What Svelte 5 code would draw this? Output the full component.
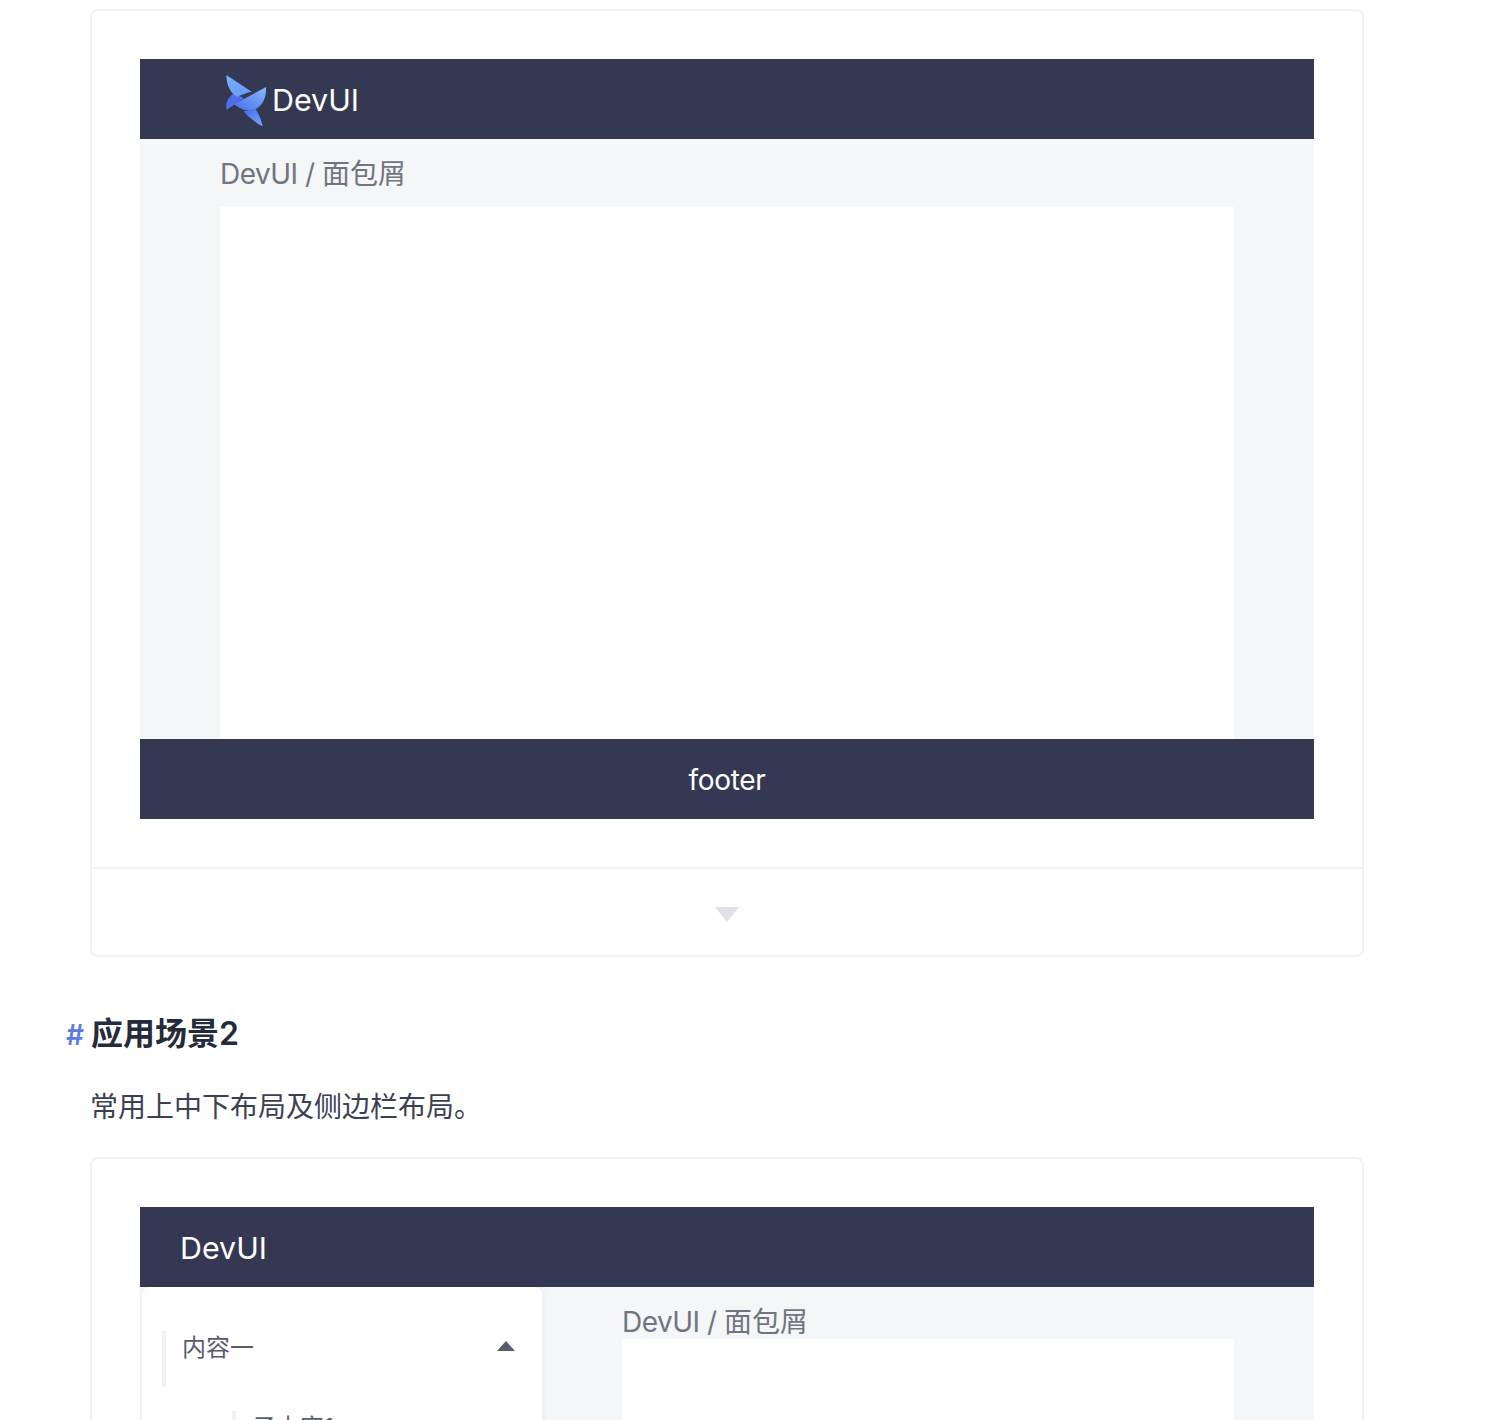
<script>
  const subItems = ['子内容1', '子内容2', '子内容3'];
</script>

<div class="page">
  <section class="card first">
    <div class="demo">
      <div class="layout">
        <header class="bar top logo-bar">
          <svg class="logo" viewBox="0 0 150 180" aria-hidden="true">
            <defs>
              <linearGradient id="w1" x1="0" y1="0" x2="1" y2="1">
                <stop offset="0" stop-color="#72b4fc" />
                <stop offset="1" stop-color="#6a94f6" />
              </linearGradient>
              <linearGradient id="w3" x1="1" y1="0" x2="0" y2="1">
                <stop offset="0" stop-color="#84b8fc" />
                <stop offset="1" stop-color="#4a6cea" />
              </linearGradient>
              <linearGradient id="w4" x1="0" y1="0" x2="1" y2="1">
                <stop offset="0" stop-color="#4468e6" />
                <stop offset="1" stop-color="#73a8fa" />
              </linearGradient>
            </defs>
            <path d="M14 122 C8 102 20 84 36 72 L66 88 Z" fill="#4a6fe8" />
            <path d="M13 18 L89 68 C72 72 56 78 46 84 C26 72 14 52 13 18Z" fill="url(#w1)" />
            <path d="M132 54 L36 106 C50 116 68 127 84 125 C116 120 134 92 132 54Z" fill="url(#w3)" />
            <path d="M64 125 C78 127 92 125 101 120 C110 135 118 152 122 172 C100 160 78 144 64 125Z" fill="url(#w4)" />
          </svg>
          <span class="brand">DevUI</span>
        </header>
        <div class="crumb-area">
          <div class="crumb"><span class="latin">DevUI /{' '}</span>面包屑</div>
          <div class="content"></div>
        </div>
        <footer class="bar foot">footer</footer>
      </div>
    </div>
    <div class="toggle">
      <span class="tri"></span>
    </div>
  </section>

  <h2 class="title"><span class="hash">#</span>应用场景2</h2>
  <p class="desc">常用上中下布局及侧边栏布局。</p>

  <section class="card">
    <div class="demo">
      <div class="layout">
        <header class="bar top plain">
          <span class="brand">DevUI</span>
        </header>
        <div class="split">
          <aside class="side">
            <div class="menu-item">
              <span>内容一</span>
              <span class="up"></span>
            </div>
            {#each subItems as item}
              <div class="sub-item">{item}</div>
            {/each}
          </aside>
          <div class="main">
            <div class="crumb small"><span class="latin">DevUI /{' '}</span>面包屑</div>
            <div class="content tall"></div>
          </div>
        </div>
      </div>
    </div>
  </section>
</div>

<style>
  :global(body) {
    margin: 0;
    background: #fff;
  }
  .page {
    height: 1420px;
    overflow: hidden;
    box-sizing: border-box;
    padding: 9px 0 0 90px;
    font-family: Inter, "Noto Sans CJK SC", sans-serif;
    color: #252b3a;
  }
  .card {
    box-sizing: border-box;
    width: 1274px;
    border: 2px solid #f2f2f3;
    border-radius: 8px;
    background: #fff;
  }
  .demo {
    padding: 48px;
  }
  .first .demo {
    border-bottom: 2px solid #f2f2f3;
  }
  .bar {
    height: 80px;
    display: flex;
    align-items: center;
    background: #353853;
    color: #fff;
  }
  .logo-bar {
    padding-left: 82px;
  }
  .plain {
    padding-left: 40px;
  }
  .logo {
    width: 50px;
    height: 60px;
    flex: none;
  }
  .brand {
    font-size: 30.4px;
    line-height: 40px;
    padding-top: 2px;
  }
  .foot {
    justify-content: center;
    font-size: 28px;
    letter-spacing: -0.3px;
    padding-top: 1px;
    box-sizing: border-box;
  }
  .crumb-area {
    background: #f5f6f8;
    padding: 0 80px;
  }
  .crumb {
    height: 68px;
    line-height: 70px;
    font-size: 28px;
    color: #71757f;
  }
  .latin {
    letter-spacing: -0.5px;
  }
  .content {
    height: 532px;
    background: #fff;
  }
  .toggle {
    height: 86px;
    display: flex;
    align-items: center;
    justify-content: center;
  }
  .tri {
    width: 0;
    height: 0;
    border-left: 12px solid transparent;
    border-right: 12px solid transparent;
    border-top: 15px solid #dfe1ea;
    margin-top: 4px;
  }
  .title {
    position: relative;
    margin: 57px 0 0;
    padding-left: 1px;
    font-size: 32px;
    line-height: 40px;
    font-weight: 600;
    color: #252b3a;
  }
  .hash {
    position: absolute;
    left: -24px;
    top: 1px;
    color: #5e7ce0;
    font-size: 28px;
  }
  .desc {
    margin: 33px 0 30px;
    font-size: 28px;
    line-height: 40px;
    color: #3b4053;
  }
  .split {
    display: flex;
    background: #f5f6f8;
    height: 400px;
  }
  .side {
    box-sizing: border-box;
    width: 400px;
    margin-left: 2px;
    padding: 44px 20px 0;
    background: #fff;
    border-radius: 8px 8px 0 0;
    box-shadow: 0 0 8px rgba(37, 43, 58, 0.06);
    color: #575d6c;
    font-size: 24px;
  }
  .menu-item {
    height: 56px;
    box-sizing: border-box;
    border-left: 4px solid #f2f2f3;
    padding: 0 7px 0 16px;
    display: flex;
    align-items: flex-start;
    justify-content: space-between;
    line-height: 34px;
  }
  .up {
    width: 0;
    height: 0;
    margin-top: 10px;
    border-left: 9px solid transparent;
    border-right: 9px solid transparent;
    border-bottom: 10px solid #575d6c;
  }
  .sub-item {
    margin: 24px 0 0 70px;
    height: 56px;
    border-left: 4px solid #f2f2f3;
    padding-left: 16px;
    line-height: 34px;
  }
  .main {
    margin-left: 80px;
    width: 612px;
  }
  .crumb.small {
    height: 52px;
    line-height: 70px;
  }
  .tall {
    height: 400px;
  }
</style>
